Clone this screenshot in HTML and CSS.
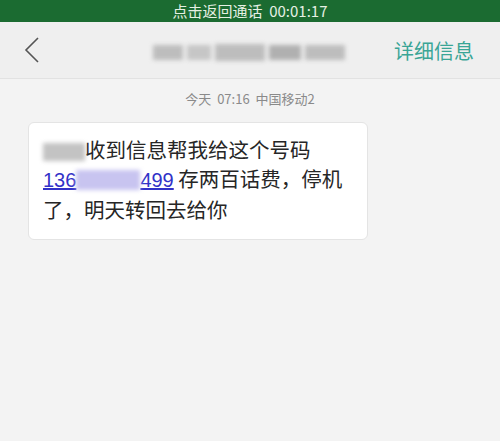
FILE: index.html
```html
<!DOCTYPE html>
<html lang="zh">
<head>
    <meta charset="UTF-8">
    <meta name="viewport" content="width=device-width, initial-scale=1.0">
    <title>信息</title>
    <link rel="stylesheet" href="styles.css">
</head>
<body>
<div class="call-bar">点击返回通话&nbsp;&nbsp;00:01:17</div>

<div class="header">
    <svg class="back" width="16" height="28" viewBox="0 0 16 28">
        <path d="M14 2 L2 14 L14 26" fill="none" stroke="#555" stroke-width="1.6"/>
    </svg>
    <div class="contact">
        <span class="blot b1"></span>
        <span class="blot b2"></span>
        <span class="blot b3"></span>
        <span class="blot b4"></span>
        <span class="blot b5"></span>
    </div>
    <a class="details">详细信息</a>
</div>

<div class="thread">
    <div class="stamp">今天&nbsp;&nbsp;07:16&nbsp;&nbsp;中国移动2</div>
    <div class="bubble">
        <p><span class="mask"></span>收到信息帮我给这个号码<br><a class="num">136<span class="num-mask"></span>499</a> 存两百话费，停机<br>了，明天转回去给你</p>
    </div>
</div>
</body>
</html>
```

FILE: styles.css
```css
body {
    margin: 0;
    background: #f3f3f3;
    font-family: "Noto Sans CJK SC", "Liberation Sans", sans-serif;
    height: 441px;
    overflow: hidden;
}
.call-bar {
    height: 22px;
    background: #1b6b31;
    color: #e6f0e4;
    font-size: 15px;
    line-height: 22px;
    text-align: center;
}
.header {
    height: 56px;
    background: #efefef;
    border-bottom: 1px solid #e2e2e2;
    display: flex;
    align-items: center;
    padding: 0 26px 0 24px;
}
.back {
    display: block;
}
.contact {
    flex: 1;
    display: flex;
    justify-content: center;
    align-items: center;
    gap: 4px;
    filter: blur(2px);
    margin-left: 64px;
    margin-top: 4px;
}
.blot {
    display: block;
    height: 15px;
    background: #bdbdbd;
}
.b1 { width: 30px; }
.b2 { width: 24px; background: #c6c6c6; }
.b3 { width: 50px; height: 17px; }
.b4 { width: 32px; background: #b0b0b0; }
.b5 { width: 40px; }
.details {
    color: #3aa596;
    font-size: 20px;
}
.thread {
    padding: 10px 0 0 0;
}
.stamp {
    text-align: center;
    color: #8a8a8a;
    font-size: 13px;
    line-height: 20px;
    margin-bottom: 13px;
}
.bubble {
    margin-left: 28px;
    width: 340px;
    height: 118px;
    background: #fff;
    border: 1px solid #e4e4e4;
    border-radius: 6px;
    box-sizing: border-box;
}
.bubble p {
    margin: 12px 0 0 14px;
    font-size: 20.5px;
    line-height: 29px;
    color: #262626;
}
.mask {
    display: inline-block;
    width: 42px;
    height: 18px;
    vertical-align: -3px;
    background: #aaa;
    filter: blur(2px);
    opacity: 0.7;
}
.num {
    color: #3232c8;
    text-decoration: underline;
    font-family: "Liberation Sans", sans-serif;
    font-size: 20px;
}
.num-mask {
    display: inline-block;
    width: 64px;
    height: 20px;
    vertical-align: -3px;
    background: #c8c4f0;
    filter: blur(2px);
}
```
